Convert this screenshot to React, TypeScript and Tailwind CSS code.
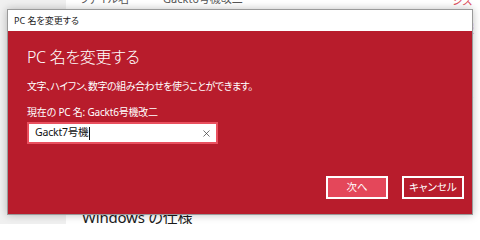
import { X } from "lucide-react"

const jp = "font-['Noto_Sans','Noto_Sans_CJK_JP',sans-serif] [font-feature-settings:'palt']"

export default function App() {
  return (
    <div className={`relative h-[224px] w-[480px] overflow-hidden bg-white ${jp}`}>
      {/* settings page behind the dialog */}
      <div className="flex h-full">
        <div className="w-[66px] shrink-0 bg-[#f0f0f0]" />
        <div className="flex flex-1 flex-col">
          <div className="-mt-[9px] flex gap-[34px] pl-[14px] text-[11px] text-[#555]">
            <span>ファイル名</span>
            <span>Gackt6号機改二</span>
          </div>
          <div className="flex-1" />
          <div className="mb-[-3px] pl-[16px] text-[15px] leading-[20px] tracking-[-0.2px] text-[#1a1a1a]">Windows の仕様</div>
        </div>
        <div className="flex w-[28px] shrink-0 flex-col gap-[10px] text-[11px] leading-[14px] text-[#e0505e]">
          <span className="-mt-[6px]">システム情報</span>
          <span>PC</span>
          <span className="mt-[20px]">ヘルプ</span>
          <span>フィードバック</span>
        </div>
      </div>

      {/* dialog */}
      <div className="absolute left-[7px] top-[9px] flex h-[206px] w-[466px] flex-col border border-[#9a9a9a] bg-[#b81c2c] shadow-[0_0_8px_rgba(0,0,0,0.25)]">
        <div className="flex h-[21px] items-center bg-white pl-[6px] text-[9px] text-[#222]">PC 名を変更する</div>
        <div className="flex flex-1 flex-col px-[19px] text-white">
          <div className="mt-[15px] text-[16px] font-light leading-[22px] tracking-[-0.3px]">PC 名を変更する</div>
          <div className="mt-[11px] text-[10px] leading-[14px] tracking-[-0.5px]">文字、ハイフン、数字の組み合わせを使うことができます。</div>
          <div className="mt-[12px] text-[10px] leading-[14px] tracking-[-0.2px]">現在の PC 名: Gackt6号機改二</div>
          <div className="mt-[3px] flex h-[22px] w-[191px] items-center border-2 border-[#e9505f] bg-white pl-[6px] pr-[4px] text-[10.5px] tracking-[-0.2px] text-[#111]">
            <span>Gackt7号機</span>
            <span className="ml-[1px] h-[13px] w-px bg-[#111]" />
            <span className="flex-1" />
            <X className="h-[11px] w-[11px] text-[#333]" strokeWidth={1.5} />
          </div>
          <div className="flex-1" />
          <div className="-mr-[11px] mb-[15px] flex justify-end gap-[14px]">
            <button className="flex h-[23px] w-[62px] items-center justify-center border-2 border-white bg-[#e4475a] text-[10.5px] text-white">次へ</button>
            <button className="flex h-[23px] w-[62px] items-center justify-center border-2 border-white bg-[#b81c2c] text-[10.5px] text-white">キャンセル</button>
          </div>
        </div>
      </div>
    </div>
  )
}
